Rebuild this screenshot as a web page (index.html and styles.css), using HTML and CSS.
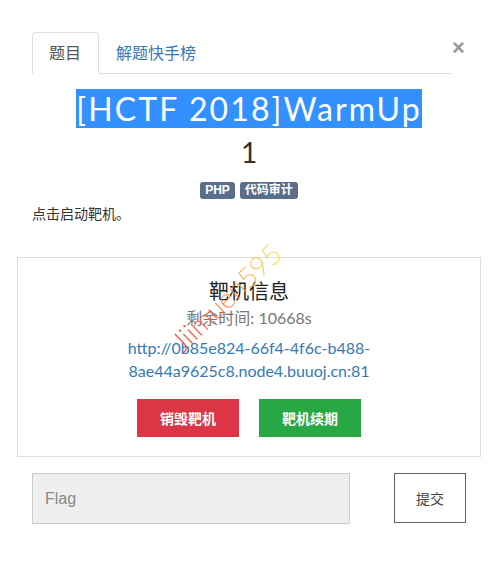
FILE: index.html
```html
<!DOCTYPE html>
<html lang="zh-CN">
<head>
  <meta charset="UTF-8" />
  <meta name="viewport" content="width=device-width, initial-scale=1.0"/>
  <title>[HCTF 2018]WarmUp</title>
  <link rel="stylesheet" href="styles.css">
</head>
<body>
  <div class="modal">
    <div class="modal-head">
      <ul class="tabs">
        <li class="tab active">题目</li>
        <li class="tab">解题快手榜</li>
      </ul>
      <button class="close">&times;</button>
    </div>

    <div class="challenge">
      <h2 class="chal-name"><span class="selected">[HCTF 2018]WarmUp</span></h2>
      <h3 class="chal-value">1</h3>
      <div class="tags">
        <span class="badge">PHP</span>
        <span class="badge">代码审计</span>
      </div>
      <p class="desc">点击启动靶机。</p>
    </div>

    <div class="target-box">
      <h4 class="target-title">靶机信息</h4>
      <p class="time-left">剩余时间: 10668s</p>
      <a class="target-url" href="#">http://0b85e824-66f4-4f6c-b488-<br>8ae44a9625c8.node4.buuoj.cn:81</a>
      <div class="target-actions">
        <button class="btn btn-danger">销毁靶机</button>
        <button class="btn btn-success">靶机续期</button>
      </div>
      <div class="watermark">Jiimuen595</div>
    </div>

    <div class="submit-row">
      <input class="flag-input" type="text" placeholder="Flag">
      <button class="submit-btn">提交</button>
    </div>
  </div>
</body>
</html>
```

FILE: styles.css
```css
body {
  margin: 0;
  background-color: #fff;
  color: #333;
  font-family: Lato, "Noto Sans CJK SC", sans-serif;
}

.modal {
  padding: 32px 17px 0 17px;
}

.modal-head {
  display: flex;
  align-items: flex-start;
  padding-left: 15px;
}

.tabs {
  flex: 1;
  display: flex;
  list-style: none;
  margin: 0;
  padding: 0;
  border-bottom: 1px solid #ddd;
}

.tab {
  height: 40px;
  line-height: 40px;
  padding: 0 17px 0 16px;
  font-size: 16px;
  color: #337ab7;
  margin-bottom: -1px;
  border: 1px solid transparent;
  border-radius: 4px 4px 0 0;
}

.tab.active {
  color: #555;
  border-color: #ddd;
  border-bottom-color: #fff;
  background-color: #fff;
}

.close {
  width: 29px;
  margin-top: 6px;
  padding: 0;
  background: none;
  border: none;
  font-family: "Liberation Sans", sans-serif;
  font-size: 22px;
  font-weight: bold;
  color: #999;
  line-height: 20px;
  text-align: left;
}

.challenge {
  padding: 0 15px;
}

.chal-name {
  margin: 16px 0 0;
  text-align: center;
  font-family: Lato, sans-serif;
  font-weight: 400;
  font-size: 32px;
  line-height: 38px;
  letter-spacing: 2.1px;
}

.selected {
  background-color: #3390ff;
  color: #fff;
}

.chal-value {
  margin: 8px 0 0;
  text-align: center;
  font-weight: 400;
  font-size: 28px;
  line-height: 32px;
}

.tags {
  display: flex;
  justify-content: center;
  gap: 5px;
  margin-top: 14px;
}

.badge {
  background-color: #5a6e8c;
  color: #fff;
  font-family: "Liberation Sans", "Noto Sans CJK SC", sans-serif;
  font-size: 12px;
  font-weight: bold;
  line-height: 17px;
  padding: 0 5px;
  border-radius: 3px;
}

.desc {
  margin: 4px 0 0;
  font-family: "Noto Sans CJK SC", sans-serif;
  font-size: 14px;
  line-height: 20px;
}

.target-box {
  position: relative;
  margin-top: 34px;
  border: 1px solid #ddd;
  padding: 19px 0 19px;
  text-align: center;
}

.target-title {
  margin: 0;
  font-family: "Noto Sans CJK SC", sans-serif;
  font-weight: 400;
  font-size: 20px;
  line-height: 28px;
  color: #222;
}

.time-left {
  margin: 0;
  color: #777;
  font-size: 16px;
  line-height: 26px;
}

.target-url {
  display: block;
  margin-top: 5px;
  color: #337ab7;
  text-decoration: none;
  font-size: 16px;
  line-height: 23px;
}

.target-actions {
  display: flex;
  justify-content: center;
  gap: 20px;
  margin-top: 17px;
}

.btn {
  width: 102px;
  height: 38px;
  border: none;
  color: #fff;
  font-family: "Noto Sans CJK SC", sans-serif;
  font-size: 14px;
  font-weight: bold;
}

.btn-danger {
  background-color: #dc3545;
}

.btn-success {
  background-color: #28a745;
}

.watermark {
  position: absolute;
  left: 136px;
  top: 20px;
  width: 150px;
  transform: rotate(-44deg);
  font-size: 28px;
  font-weight: 300;
  line-height: 32px;
  text-align: left;
  background: linear-gradient(90deg, #ff2a2a, #ff8a3a 50%, #ffee44);
  -webkit-background-clip: text;
  background-clip: text;
  color: transparent;
  opacity: 0.85;
  pointer-events: none;
}

.submit-row {
  display: flex;
  justify-content: space-between;
  align-items: flex-start;
  margin-top: 16px;
  padding: 0 15px;
}

.flag-input {
  width: 318px;
  height: 51px;
  box-sizing: border-box;
  padding: 0 12px;
  background-color: #efefef;
  border: 1px solid #ccc;
  font-family: "Liberation Sans", sans-serif;
  font-size: 16px;
}

.flag-input::placeholder {
  color: #888;
}

.submit-btn {
  width: 72px;
  height: 50px;
  background-color: #fff;
  border: 1px solid #5a6268;
  color: #444;
  font-family: "Noto Sans CJK SC", sans-serif;
  font-size: 14px;
}
```
